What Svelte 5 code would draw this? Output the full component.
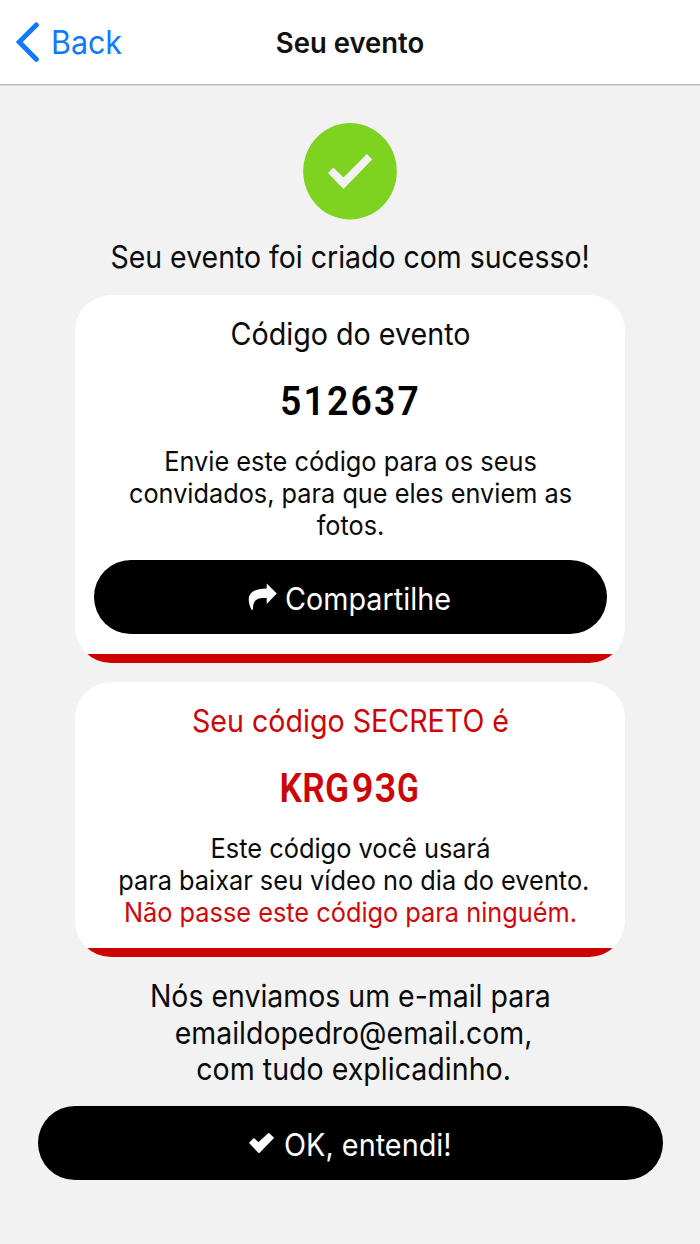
<script>
  const share = [
    { text: 'Envie este código para os seus', scale: 0.939 },
    { text: 'convidados, para que eles enviem as', scale: 0.937 },
    { text: 'fotos.', scale: 0.937 }
  ];
  const secret = [
    { text: 'Este código você usará', scale: 0.94 },
    { text: 'para baixar seu vídeo no dia do evento.', scale: 0.938, indent: true },
    { text: 'Não passe este código para ninguém.', scale: 0.938, alert: true }
  ];
  const notice = [
    { text: 'Nós enviamos um e-mail para', scale: 0.918 },
    { text: 'emaildopedro@email.com,', scale: 0.917, indent: true },
    { text: 'com tudo explicadinho.', scale: 0.922, indent: true }
  ];
</script>

{#snippet lines(items)}
  {#each items as item}
    <span class="line" class:indent={item.indent} class:alert={item.alert} style:--sx={item.scale}>{item.text}</span>
  {/each}
{/snippet}

<div class="screen">
  <header>
    <button class="back" aria-label="Back">
      <svg width="24" height="40" viewBox="0 0 24 40"><path d="M20.3 2.9 3.2 20l17.1 17.3" fill="none" stroke="#107aff" stroke-width="5" stroke-linecap="round" stroke-linejoin="miter" /></svg>
      <span>Back</span>
    </button>
    <h1>Seu evento</h1>
    <div></div>
  </header>

  <main>
    <svg class="success" width="94" height="97" viewBox="0 0 94 97">
      <ellipse cx="47" cy="48.3" rx="46.8" ry="48.2" fill="#7ed321" />
      <path d="M24.9 49.9 30.3 44.4 40.5 54.5 63.9 30.9 69.2 36.6 40.5 66.1Z" fill="#f2f2f2" />
    </svg>
    <p class="lead"><span class="line" style:--sx={0.918}>Seu evento foi criado com sucesso!</span></p>

    <section class="card">
      <h2><span class="line" style:--sx={0.925}>Código do evento</span></h2>
      <div class="code"><span class="digits">512637</span></div>
      <p class="body">{@render lines(share)}</p>
      <button class="pill share">
        <svg width="29" height="29" viewBox="0 0 29 29"><path d="M18.7.4 28.8 10.6 18.7 20.9V15C9.5 14.3 4.6 16.8 5 26.7H3.5C-2 15.5-.5 5.6 18.7 5.6Z" fill="#fff" /></svg>
        <span>Compartilhe</span>
      </button>
    </section>

    <section class="card secret">
      <h2><span class="line" style:--sx={0.923}>Seu código SECRETO é</span></h2>
      <div class="code"><span class="krg">KRG</span><span class="num">93</span><span class="g">G</span></div>
      <p class="body">{@render lines(secret)}</p>
    </section>

    <p class="notice">{@render lines(notice)}</p>

    <button class="pill ok">
      <svg width="25" height="21" viewBox="0 0 25 21"><path d="M1.3 9.9 4.9 6.3 9.4 10.5 19.9 1.1 23.8 4.9 10 19Z" fill="#fff" stroke="#fff" stroke-width="2" stroke-linejoin="round" /></svg>
      <span>OK, entendi!</span>
    </button>
  </main>
</div>

<style>
  :global(body) { margin: 0; background: #f2f2f2; }
  .screen { width: 700px; height: 1244px; overflow: hidden; background: #f2f2f2; color: #0a0a0a; font-family: Inter, sans-serif; }
  h1, h2, p { margin: 0; font-weight: 400; }
  button { border: 0; padding: 0; margin: 0; font: inherit; background: none; }
  header { display: grid; grid-template-columns: 200px 300px 200px; align-items: center; height: 84px; background: #fff; border-bottom: 1px solid #b8b8b8; box-shadow: 0 1px #dedede; }
  .back { display: flex; align-items: center; gap: 11px; padding-left: 16px; color: #107aff; font-size: 32px; line-height: 40px; }
  .back span { transform: scaleX(0.95); transform-origin: left; padding-top: 2px; }
  h1 { font-size: 28px; font-weight: 600; line-height: 36px; text-align: center; transform: scaleX(0.98); padding-top: 2px; color: #111; }
  main { display: flex; flex-direction: column; align-items: center; padding-top: 37.7px; }
  .success { display: block; }
  .line { display: block; white-space: nowrap; transform: scaleX(var(--sx)); }
  .indent { padding-left: 7px; }
  .alert { color: #d3060c; }
  .lead { margin-top: 19.5px; font-size: 31px; line-height: 36px; text-align: center; }
  .card { box-sizing: border-box; width: 550px; height: 368px; margin-top: 20.1px; padding: 20.7px 18.5px 0; border-radius: 36px; text-align: center; background: linear-gradient(#cc0000, #cc0000) bottom / 100% 9.5px no-repeat #fff; }
  .card.secret { height: 275px; margin-top: 19.2px; }
  h2 { font-size: 31px; line-height: 36px; }
  .secret h2, .secret .code { color: #cd0508; }
  .code { display: flex; justify-content: center; margin-top: 25px; font: 600 41px/48px Roboto, sans-serif; color: #000; }
  .digits { letter-spacing: 2.4px; transform: scaleX(0.91); }
  .code span { white-space: nowrap; }
  .krg { transform: scaleX(0.86); transform-origin: right; letter-spacing: 0.5px; }
  .num { transform: scaleX(0.93); letter-spacing: 1px; margin-right: -1.5px; }
  .g { transform: scaleX(0.78); transform-origin: left; }
  .secret .code { padding-right: 7px; }
  .body { margin-top: 20.8px; font-size: 27px; line-height: 32.2px; }
  .pill { display: flex; align-items: center; height: 74px; border-radius: 37px; background: #000; color: #fff; font-size: 31px; line-height: 36px; }
  .pill span { transform-origin: left; white-space: nowrap; }
  .share { width: 513px; margin-top: 17.8px; padding-left: 154.5px; gap: 8px; }
  .share span { transform: scaleX(0.928); padding-top: 4px; }
  .ok { width: 625px; margin-top: 18.5px; padding-left: 211.2px; gap: 10px; }
  .ok span { transform: scaleX(0.93); padding-top: 4px; }
  .notice { margin-top: 20.7px; font-size: 31px; line-height: 36.5px; text-align: center; }
</style>
